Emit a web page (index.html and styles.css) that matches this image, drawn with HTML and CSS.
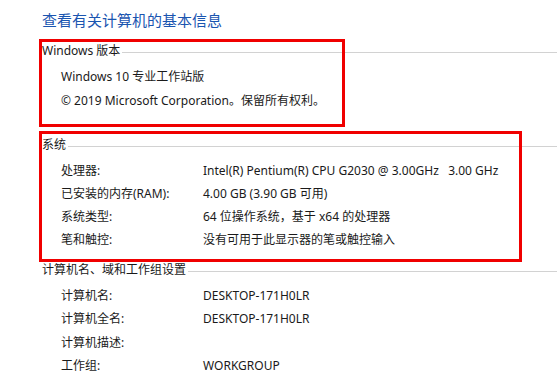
FILE: index.html
```html
<!DOCTYPE html>
<html lang="zh-CN">
<head>
    <meta charset="UTF-8">
    <title>查看有关计算机的基本信息</title>
    <link rel="stylesheet" href="styles.css">
</head>
<body>

    <div class="page">
        <h1 class="title">查看有关计算机的基本信息</h1>

        <section class="group group-edition">
            <div class="marker marker-edition"></div>
            <div class="group-head"><span>Windows 版本</span></div>
            <p class="line">Windows 10 专业工作站版</p>
            <p class="line">© 2019 Microsoft Corporation。保留所有权利。</p>
        </section>

        <section class="group group-system">
            <div class="marker marker-system"></div>
            <div class="group-head"><span>系统</span></div>
            <div class="row"><span class="label">处理器:</span><span>Intel(R) Pentium(R) CPU G2030 @ 3.00GHz&nbsp;&nbsp;&nbsp;3.00 GHz</span></div>
            <div class="row"><span class="label">已安装的内存(RAM):</span><span>4.00 GB (3.90 GB 可用)</span></div>
            <div class="row"><span class="label">系统类型:</span><span>64 位操作系统，基于 x64 的处理器</span></div>
            <div class="row"><span class="label">笔和触控:</span><span>没有可用于此显示器的笔或触控输入</span></div>
        </section>

        <section class="group group-name">
            <div class="group-head"><span>计算机名、域和工作组设置</span></div>
            <div class="row"><span class="label">计算机名:</span><span>DESKTOP-171H0LR</span></div>
            <div class="row"><span class="label">计算机全名:</span><span>DESKTOP-171H0LR</span></div>
            <div class="row"><span class="label">计算机描述:</span><span></span></div>
            <div class="row"><span class="label">工作组:</span><span>WORKGROUP</span></div>
        </section>
    </div>

</body>
</html>
```

FILE: styles.css
```css
body {
    margin: 0;
    background-color: #fff;
    color: #1a1a1a;
    font-family: "Noto Sans", "Noto Sans CJK SC", sans-serif;
    font-size: 12px;
}

.page {
    padding: 10px 0 0 42px;
}

.title {
    margin: 0;
    font-size: 15px;
    font-weight: normal;
    line-height: 20px;
    color: #1a55b0;
}

.group {
    position: relative;
}

.group-edition {
    margin-top: 11px;
}

.group-system {
    margin-top: 22px;
}

.group-name {
    margin-top: 9px;
}

/* 标题 + 右侧分隔线 */
.group-head {
    display: flex;
    align-items: center;
    height: 20px;
    line-height: 20px;
    margin-bottom: 4px;
}

.group-head::after {
    content: "";
    flex: 1;
    height: 1px;
    margin: 3px 0 0 2px;
    background-color: #d2d2d2;
}

.line {
    margin: 0;
    padding-left: 19px;
    line-height: 24px;
}

.row {
    display: flex;
    padding-left: 19px;
    line-height: 23px;
}

.group-name .row {
    line-height: 23.3px;
}

.label {
    width: 142px;
    flex-shrink: 0;
}

/* 红色标注框 */
.marker {
    position: absolute;
    border: 3px solid #f00000;
    pointer-events: none;
}

.marker-edition {
    top: -2px;
    left: -3px;
    width: 300px;
    height: 82px;
}

.marker-system {
    top: -4px;
    left: -3px;
    width: 477px;
    height: 125px;
}
```
